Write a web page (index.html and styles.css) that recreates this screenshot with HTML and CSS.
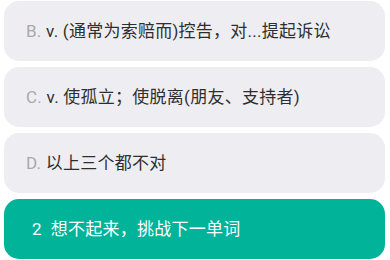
FILE: index.html
```html
<!DOCTYPE html>
<html lang="zh-CN">
<head>
<meta charset="utf-8">
<link rel="stylesheet" href="styles.css">
</head>
<body>
<div class="list">
  <div class="option"><p class="label"><span class="letter">B.</span> v. (通常为索赔而)控告，对...提起诉讼</p></div>
  <div class="option"><p class="label"><span class="letter">C.</span> v. 使孤立；使脱离(朋友、支持者)</p></div>
  <div class="option"><p class="label"><span class="letter">D.</span> 以上三个都不对</p></div>
  <div class="option action"><p class="label">2&nbsp; 想不起来，挑战下一单词</p></div>
</div>
</body>
</html>
```
FILE: styles.css
```css
html, body {
  margin: 0;
  padding: 0;
  background: #ffffff;
}
body {
  font-family: Roboto, "Noto Sans CJK SC", sans-serif;
  font-size: 17px;
}
.list {
  display: flex;
  flex-direction: column;
  gap: 6px;
  padding: 1px 5px 0 4px;
}
.option {
  height: 60px;
  border-radius: 15px;
  background: #eeeef2;
  color: #2e2e2e;
  display: flex;
  align-items: center;
  padding-left: 22px;
  box-sizing: border-box;
}
.label {
  margin: 0;
  white-space: nowrap;
  line-height: 20px;
  letter-spacing: 0.25px;
}
.letter {
  color: #a8a8ac;
}
.action {
  background: #00b399;
  color: #ffffff;
  padding-left: 28px;
}
```
